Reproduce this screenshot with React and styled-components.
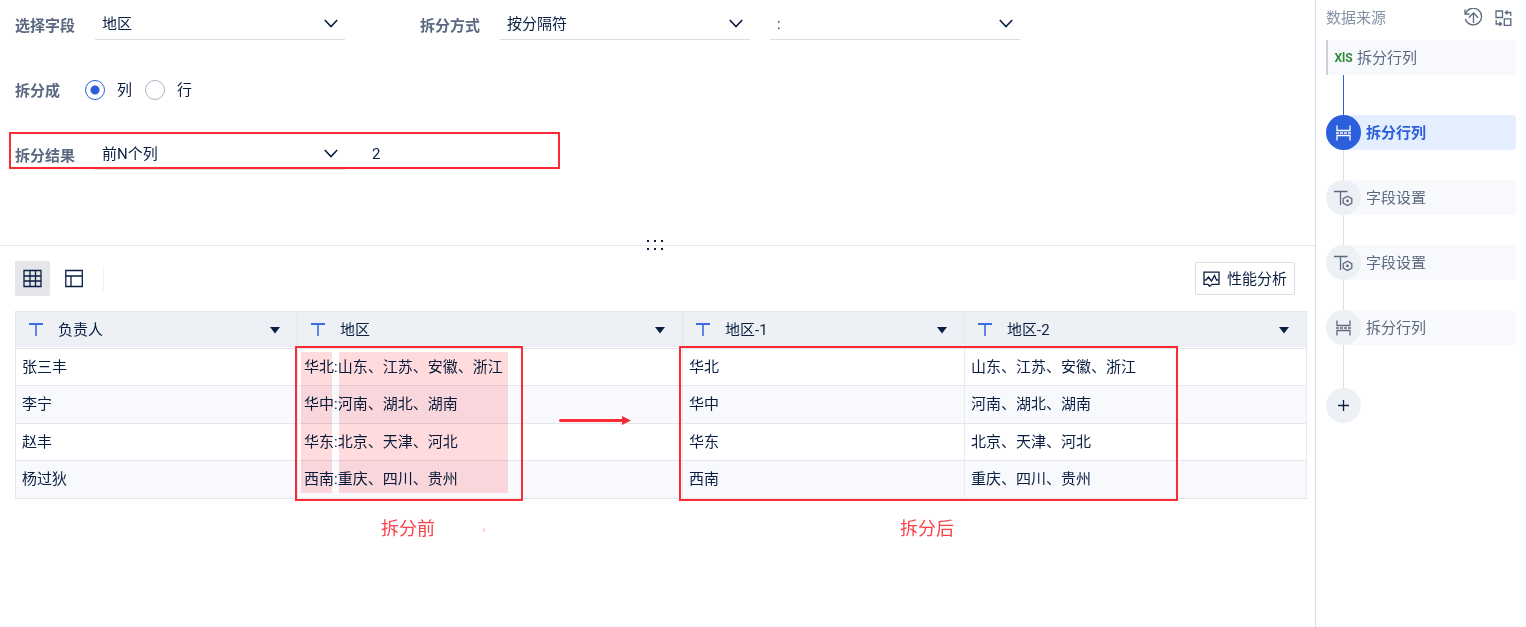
import React, { useState } from "react";
import styled, { createGlobalStyle, css } from "styled-components";

const GlobalStyle = createGlobalStyle`
  * {
    box-sizing: border-box;
  }

  body {
    margin: 0;
    background: #fff;
    color: #091e40;
    font-family: Roboto, "Noto Sans CJK SC", sans-serif;
    font-size: 15px;
    line-height: 20px;
  }

  button,
  input,
  select {
    font: inherit;
    color: inherit;
  }
`;

// Page layout
const Page = styled.div`
  display: grid;
  grid-template-columns: minmax(0, 1fr) 211px;
  min-height: 100vh;
`;

const Main = styled.main`
  min-width: 0;
`;

// Config form
const ConfigPane = styled.form`
  position: relative;
  display: flex;
  flex-direction: column;
  gap: 33px;
  padding: 8px 15px 75px;
  border-bottom: 1px solid #e4e6ec;
`;

const FormRow = styled.div`
  display: flex;
  align-items: center;
  gap: 75px;
`;

const Field = styled.div`
  position: relative;
  display: flex;
  align-items: center;
  gap: ${(props) => props.$gap || 20}px;
  height: 32px;
`;

const FieldLabel = styled.label`
  padding-top: 4px;
  color: #5b6980;
  font-weight: bold;
`;

const SelectWrap = styled.div`
  position: relative;
  width: 250px;
`;

const Select = styled.select`
  appearance: none;
  display: block;
  width: 100%;
  height: 32px;
  padding: 0 30px 0 7px;
  border: none;
  border-bottom: 1px solid #dcdee2;
  border-radius: 0;
  background: transparent;
  outline: none;
`;

const SelectArrow = styled.svg`
  position: absolute;
  top: 10px;
  right: 7px;
  pointer-events: none;
`;

const NumberInput = styled.input`
  width: 189px;
  height: 32px;
  padding: 0 7px;
  border: none;
  background: transparent;
  outline: none;
`;

const RadioGroup = styled.div`
  display: flex;
  gap: 13px;
  padding-top: 2px;
`;

const RadioLabel = styled.label`
  display: flex;
  align-items: center;
  gap: 12px;
  cursor: pointer;
`;

const Radio = styled.input`
  appearance: none;
  width: 20px;
  height: 20px;
  margin: 0;
  border: 1px solid #a9b1c0;
  border-radius: 50%;
  cursor: pointer;

  &:checked {
    border-color: #2b5fdb;
    background: radial-gradient(circle, #2b5fdb 4px, transparent 5px);
  }
`;

const DragHandle = styled.svg`
  position: absolute;
  left: 50%;
  bottom: -6px;
  margin-left: -12px;
  cursor: row-resize;
`;

// Preview
const PreviewPane = styled.section`
  padding: 15px 8px 15px 15px;
`;

const Toolbar = styled.div`
  display: flex;
  align-items: center;
  gap: 6px;
  margin-bottom: 15px;
  padding-right: 12px;
`;

const IconButton = styled.button`
  display: flex;
  align-items: center;
  justify-content: center;
  width: 35px;
  height: 35px;
  padding: 0;
  border: none;
  border-radius: 2px;
  background: ${(props) => (props.$active ? "#e4e6ea" : "transparent")};
  cursor: pointer;
`;

const Divider = styled.span`
  width: 1px;
  height: 25px;
  margin-left: 6px;
  background: #eff0f4;
`;

const AnalysisButton = styled.button`
  display: flex;
  align-items: center;
  justify-content: center;
  gap: 7px;
  height: 33px;
  margin-left: auto;
  padding: 0 7px;
  border: 1px solid #dcdee6;
  border-radius: 2px;
  background: #fff;
  white-space: nowrap;
  cursor: pointer;
`;

const TableWrap = styled.div`
  position: relative;
`;

const Table = styled.table`
  width: 100%;
  table-layout: fixed;
  border-collapse: separate;
  border-spacing: 0;
  border-top: 1px solid #e4e6ec;
  border-left: 1px solid #e4e6ec;
`;

const Col = styled.col`
  width: ${(props) => props.$width};
`;

const HeadCell = styled.th`
  height: 37px;
  padding: 0 17px 0 13px;
  border-right: 1px solid #e4e6ec;
  border-bottom: 1px solid #e4e6ec;
  background: #edf1f6;
  box-shadow: inset 0 -1px #fff;
  font-weight: normal;
  text-align: left;
`;

const HeadContent = styled.div`
  display: flex;
  align-items: center;
`;

const HeadName = styled.span`
  flex: 1;
  margin-left: 15px;
`;

const MenuButton = styled.button`
  display: flex;
  padding: 0;
  border: none;
  background: none;
  cursor: pointer;
`;

const Cell = styled.td`
  padding: 0 6px;
  border-right: 1px solid #e8eaf0;
  border-bottom: 1px solid #e4e6ec;
  white-space: nowrap;
`;

const BodyRow = styled.tr`
  height: 37px;

  &:nth-child(even) {
    height: 38px;
    background: #f8f9fd;
  }

  &:nth-child(even) ${Cell} {
    padding-bottom: 2px;
  }
`;

// Annotations drawn over the page
const Frame = styled.div`
  position: absolute;
  border: 2px solid #f92b33;
  pointer-events: none;
`;

const ResultFrame = styled(Frame)`
  inset: -6px -6px 1px;
`;

const TableFrame = styled(Frame)`
  top: 35px;
  left: ${(props) => props.$left}px;
  width: ${(props) => props.$width}px;
  height: 155px;
`;

const Highlight = styled.div`
  position: absolute;
  top: 41px;
  left: ${(props) => props.$left}px;
  width: ${(props) => props.$width}px;
  height: 141px;
  background: #ffdbdd;
  mix-blend-mode: multiply;
  pointer-events: none;
`;

const Arrow = styled.svg`
  position: absolute;
  top: 105px;
  left: 544px;
`;

const Caption = styled.span`
  position: absolute;
  top: 206px;
  left: ${(props) => props.$left}px;
  color: #fb4148;
  font-size: 18px;
  line-height: 24px;
`;

const Speck = styled.span`
  position: absolute;
  top: 217px;
  left: 468px;
  width: 2px;
  height: 4px;
  background: #fdd5d7;
`;

// Steps sidebar
const Sidebar = styled.aside`
  padding: 5px 10px;
  border-left: 1px solid #dcdee6;
`;

const SidebarHeader = styled.header`
  display: flex;
  align-items: center;
  gap: 12px;
  height: 25px;
  margin-bottom: 10px;
  padding-right: 4px;
  color: #8592a6;
`;

const SidebarTitle = styled.span`
  flex: 1;
`;

const HeaderButton = styled.button`
  display: flex;
  padding: 0;
  border: none;
  background: none;
  color: #5b6980;
  cursor: pointer;
`;

const Source = styled.button`
  display: flex;
  align-items: center;
  gap: 4px;
  width: 100%;
  height: 35px;
  padding: 0 6px;
  border: none;
  border-left: 2px solid #cbd2dd;
  border-radius: 0 4px 4px 0;
  background: #f8f9fd;
  color: #5b6980;
  cursor: pointer;
`;

const FileType = styled.span`
  width: 19px;
  color: #2c8c3c;
  font-size: 12px;
  font-weight: bold;
`;

const Step = styled.button`
  display: flex;
  align-items: center;
  gap: 5px;
  width: 100%;
  height: 35px;
  padding: 0;
  border: none;
  border-radius: 18px 4px 4px 18px;
  background: #f8f9fd;
  color: #5b6980;
  cursor: pointer;

  ${(props) =>
    props.$active &&
    css`
      background: #e5eeff;
      color: #2b5fdb;
      font-weight: bold;
    `}
`;

const StepIcon = styled.span`
  display: flex;
  align-items: center;
  justify-content: center;
  width: 35px;
  height: 35px;
  border-radius: 50%;
  background: ${(props) => (props.$active ? "#2b5fdb" : "#edf1f6")};
  color: ${(props) => (props.$active ? "#fff" : "#5b6980")};
`;

const Connector = styled.div`
  width: 1px;
  height: ${(props) => props.$height || 30}px;
  margin-left: 17px;
  background: ${(props) => (props.$active ? "#2b5fdb" : "#dcdee2")};
`;

const AddButton = styled.button`
  display: flex;
  align-items: center;
  justify-content: center;
  width: 35px;
  height: 35px;
  padding: 0;
  border: none;
  border-radius: 50%;
  background: #edf1f6;
  cursor: pointer;
`;

// Icons
const TypeIcon = () => (
  <svg width="14" height="14" viewBox="0 0 14 14" fill="none" stroke="#3d6be0">
    <path d="M0 1h14" strokeWidth="2" />
    <path d="M7 1v12" strokeWidth="1.6" />
  </svg>
);

const CaretIcon = () => (
  <svg width="10" height="7" viewBox="0 0 10 7" fill="#091e40">
    <path d="M0 0h10L5 6.5z" />
  </svg>
);

const GridIcon = () => (
  <svg width="19" height="19" viewBox="0 0 19 19" fill="none" stroke="#091e40">
    <path d="M1 1.5h17v16H1zM1 7h17M1 12h17M7 1.5v16M12.5 1.5v16" strokeWidth="1.3" />
  </svg>
);

const LayoutIcon = () => (
  <svg width="18" height="19" viewBox="0 0 18 19" fill="none" stroke="#091e40">
    <path d="M.8 1.5h16.5v16H.8zM.8 7h16.5M6 7v10.5" strokeWidth="1.3" />
  </svg>
);

const AnalysisIcon = () => (
  <svg width="17" height="16" viewBox="0 0 17 16" fill="none" stroke="#091e40" strokeWidth="1.3">
    <path d="M5 13.3H1V1.2h15v12.1H9l-2.5 2-1.5-2z" />
    <path d="M1.5 9H3l2.5-3 3 4 3-5.5 2 4.500h2" />
  </svg>
);

const RestoreIcon = () => (
  <svg width="19" height="19" viewBox="0 0 19 19" fill="none" stroke="currentColor" strokeWidth="1.3">
    <path d="M1 1.5V6h4.5" />
    <path d="M1.5 5.5A8.3 8.3 0 1 1 1.3 11" />
    <path d="M9.5 15V5M4.8 9.7L9.5 5l4.7 4.7" />
  </svg>
);

const SwapIcon = () => (
  <svg width="17" height="18" viewBox="0 0 17 18" fill="none" stroke="currentColor" strokeWidth="1.3">
    <path d="M1 2h6.5v6.5H1zM9.3 9.8h6.5v6.5H9.3z" />
    <path d="M11 3.5h4.7V7M1.2 11v4h4" />
    <path d="M12.5.7v5.6L9.3 3.5zM4.3 12.2v5.6l3.2-2.8z" fill="currentColor" stroke="none" />
  </svg>
);

const SplitIcon = () => (
  <svg width="15" height="16" viewBox="0 0 15 16" fill="none" stroke="currentColor" strokeWidth="1.3">
    <path d="M1 .5v5h13v-5M1 15.5v-5h13v5" />
    <path d="M0 8h15" strokeDasharray="3 1" />
  </svg>
);

const FieldIcon = () => (
  <svg width="19" height="16" viewBox="0 0 19 16" fill="none" stroke="currentColor" strokeWidth="1.3">
    <path d="M0 1.5h13.5M6.5 1.5V15" />
    <path d="M13.5 6.3l4.3 2.4v4.4l-4.3 2.4-4.3-2.4V8.7z" />
    <circle cx="13.5" cy="10.9" r="1.3" fill="currentColor" stroke="none" />
  </svg>
);

const PlusIcon = () => (
  <svg width="11" height="11" viewBox="0 0 11 11" stroke="#091e40" strokeWidth="1.3">
    <path d="M5.5 0v11M0 5.5h11" />
  </svg>
);

const Dropdown = ({ id, value, label }) => (
  <SelectWrap>
    <Select id={id} aria-label={label} defaultValue={value}>
      <option>{value}</option>
    </Select>
    <SelectArrow width="14" height="10" viewBox="0 0 14 10" fill="none" stroke="#091e40" strokeWidth="1.6">
      <path d="M.8 2L7 8.5 13.2 2" />
    </SelectArrow>
  </SelectWrap>
);

const columns = [
  { name: "负责人", width: "282px" },
  { name: "地区", width: "385px" },
  { name: "地区-1", width: "282px" },
  { name: "地区-2", width: "auto" },
];

const rows = [
  ["张三丰", "华北", "山东、江苏、安徽、浙江"],
  ["李宁", "华中", "河南、湖北、湖南"],
  ["赵丰", "华东", "北京、天津、河北"],
  ["杨过狄", "西南", "重庆、四川、贵州"],
];

const steps = [
  { name: "拆分行列", icon: SplitIcon, active: true },
  { name: "字段设置", icon: FieldIcon },
  { name: "字段设置", icon: FieldIcon },
  { name: "拆分行列", icon: SplitIcon },
];

const App = () => {
  const [direction, setDirection] = useState("列");

  return (
    <Page>
      <GlobalStyle />
      <Main>
        <ConfigPane>
          <FormRow>
            <Field>
              <FieldLabel htmlFor="field">选择字段</FieldLabel>
              <Dropdown id="field" value="地区" />
            </Field>
            <Field>
              <FieldLabel htmlFor="method">拆分方式</FieldLabel>
              <Dropdown id="method" value="按分隔符" />
              <Dropdown id="separator" label="分隔符" value=":" />
            </Field>
          </FormRow>
          <FormRow>
            <Field $gap={25}>
              <FieldLabel as="span" id="direction">拆分成</FieldLabel>
              <RadioGroup role="radiogroup" aria-labelledby="direction">
                {["列", "行"].map((item) => (
                  <RadioLabel key={item}>
                    <Radio
                      type="radio"
                      name="direction"
                      checked={direction === item}
                      onChange={() => setDirection(item)}
                    />
                    {item}
                  </RadioLabel>
                ))}
              </RadioGroup>
            </Field>
          </FormRow>
          <FormRow>
            <Field>
              <FieldLabel htmlFor="result">拆分结果</FieldLabel>
              <Dropdown id="result" value="前N个列" />
              <NumberInput aria-label="列数" defaultValue="2" />
              <ResultFrame />
            </Field>
          </FormRow>
          <DragHandle width="18" height="12" viewBox="0 0 18 12" fill="#091e40">
            <path d="M1 1h2v2H1zM8 1h2v2H8zM15 1h2v2h-2zM1 9h2v2H1zM8 9h2v2H8zM15 9h2v2h-2z" />
          </DragHandle>
        </ConfigPane>

        <PreviewPane>
          <Toolbar>
            <IconButton $active aria-label="表格">
              <GridIcon />
            </IconButton>
            <IconButton aria-label="布局">
              <LayoutIcon />
            </IconButton>
            <Divider />
            <AnalysisButton>
              <AnalysisIcon />
              性能分析
            </AnalysisButton>
          </Toolbar>

          <TableWrap>
            <Table>
              <colgroup>
                {columns.map((column) => (
                  <Col key={column.name} $width={column.width} />
                ))}
              </colgroup>
              <thead>
                <tr>
                  {columns.map((column) => (
                    <HeadCell key={column.name}>
                      <HeadContent>
                        <TypeIcon />
                        <HeadName>{column.name}</HeadName>
                        <MenuButton aria-label={column.name}>
                          <CaretIcon />
                        </MenuButton>
                      </HeadContent>
                    </HeadCell>
                  ))}
                </tr>
              </thead>
              <tbody>
                {rows.map(([owner, region, provinces]) => (
                  <BodyRow key={owner}>
                    <Cell>{owner}</Cell>
                    <Cell>{`${region}:${provinces}`}</Cell>
                    <Cell>{region}</Cell>
                    <Cell>{provinces}</Cell>
                  </BodyRow>
                ))}
              </tbody>
            </Table>

            {/* before / after marks */}
            <Highlight $left={286} $width={31} />
            <Highlight $left={324} $width={169} />
            <TableFrame $left={280} $width={228} />
            <TableFrame $left={664} $width={499} />
            <Arrow width="72" height="10" viewBox="0 0 72 10" fill="#f92b33">
              <path d="M1.5 3H63V0l9 4.5L63 9V6H1.5a1.5 1.5 0 0 1 0-3z" />
            </Arrow>
            <Caption $left={366}>拆分前</Caption>
            <Speck />
            <Caption $left={885}>拆分后</Caption>
          </TableWrap>
        </PreviewPane>
      </Main>

      <Sidebar>
        <SidebarHeader>
          <SidebarTitle>数据来源</SidebarTitle>
          <HeaderButton aria-label="更新">
            <RestoreIcon />
          </HeaderButton>
          <HeaderButton aria-label="切换">
            <SwapIcon />
          </HeaderButton>
        </SidebarHeader>
        <Source>
          <FileType>XlS</FileType>
          拆分行列
        </Source>
        {steps.map((step, index) => (
          <React.Fragment key={index}>
            <Connector $active={step.active} $height={step.active ? 40 : 30} />
            <Step $active={step.active}>
              <StepIcon $active={step.active}>
                <step.icon />
              </StepIcon>
              {step.name}
            </Step>
          </React.Fragment>
        ))}
        <Connector $height={43} />
        <AddButton aria-label="添加">
          <PlusIcon />
        </AddButton>
      </Sidebar>
    </Page>
  );
};

export default App;
